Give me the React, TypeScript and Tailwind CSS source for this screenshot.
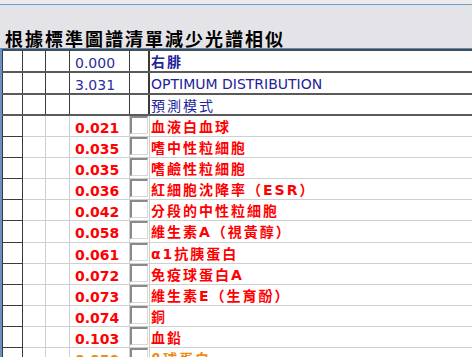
import React from "react";

type Row = { num: string; name: string; color: "red" | "orange"; h: number };

const redRows: Row[] = [
  { num: "0.021", name: "血液白血球", color: "red", h: 20 },
  { num: "0.035", name: "嗜中性粒細胞", color: "red", h: 20 },
  { num: "0.035", name: "嗜鹼性粒細胞", color: "red", h: 20 },
  { num: "0.036", name: "紅細胞沈降率（ESR）", color: "red", h: 20 },
  { num: "0.042", name: "分段的中性粒細胞", color: "red", h: 20 },
  { num: "0.058", name: "維生素A（視黃醇）", color: "red", h: 21 },
  { num: "0.061", name: "α1抗胰蛋白", color: "red", h: 20 },
  { num: "0.072", name: "免疫球蛋白A", color: "red", h: 20 },
  { num: "0.073", name: "維生素E（生育酚）", color: "red", h: 20 },
  { num: "0.074", name: "銅", color: "red", h: 20 },
  { num: "0.103", name: "血鉛", color: "red", h: 20 },
  { num: "0.050", name: "β球蛋白", color: "orange", h: 20 },
];

const numFont = { fontFamily: '"DejaVu Sans", sans-serif' };
const cjkFont = { fontFamily: '"DejaVu Sans", "Noto Sans CJK TC", sans-serif' };

function HeaderRow({ num, name, bold, latin, h }: { num: string; name: string; bold?: boolean; latin?: boolean; h: number }) {
  return (
    <div className="flex overflow-hidden border-b-2 border-[#5a5a5a]" style={{ height: h + 2 }}>
      <div className="w-[21px] shrink-0 border-l border-r border-[#3a3a3a] bg-white" />
      <div className="w-[23px] shrink-0 border-r border-[#3a3a3a] bg-white" />
      <div className="w-[24px] shrink-0 border-r border-[#3a3a3a] bg-white" />
      <div
        className="w-[60px] shrink-0 border-r border-[#3a3a3a] bg-white pl-[5px] pt-[2px] text-[14px] leading-[20px] text-[#2c2ca0]"
        style={numFont}
      >
        {num}
      </div>
      <div className="w-[20px] shrink-0 border-r-2 border-[#3a3a3a] bg-white" />
      <div
        className={
          "flex-1 bg-white pl-[1px] pt-[1px] text-[14px] leading-[20px] whitespace-nowrap text-[#22229a] " +
          (bold ? "font-bold " : "") +
          (latin ? "" : "tracking-[2px]")
        }
        style={cjkFont}
      >
        {name}
      </div>
    </div>
  );
}

function DataRow({ row }: { row: Row }) {
  const color = row.color === "red" ? "text-[#ff0000]" : "text-[#f08a10]";
  return (
    <div className="flex overflow-hidden" style={{ height: row.h + 1 }}>
      <div className="w-[21px] shrink-0 border-l border-r border-b border-[#3a3a3a] bg-white" />
      <div className="w-[23px] shrink-0 border-r border-b border-[#cfcfcf] bg-white" />
      <div className="w-[24px] shrink-0 border-r border-b border-[#cfcfcf] bg-white" />
      <div
        className={"w-[60px] shrink-0 border-r border-b border-[#cfcfcf] bg-white pl-[5px] pt-[2px] text-[14px] font-bold leading-[20px] " + color}
        style={numFont}
      >
        {row.num}
      </div>
      <div className="w-[20px] shrink-0 border-r border-b border-[#cfcfcf] bg-white">
        <div className="h-[18px] w-[18px] border-l-2 border-t-2 border-b border-r border-l-[#8a8a8a] border-t-[#8a8a8a] border-b-[#d8d8d8] border-r-[#d8d8d8] bg-white" />
      </div>
      <div
        className={"flex-1 border-b border-[#cfcfcf] bg-white pl-[1px] pt-[1px] text-[14px] font-bold tracking-[2px] leading-[20px] whitespace-nowrap " + color}
        style={cjkFont}
      >
        {row.name}
      </div>
    </div>
  );
}

export default function App() {
  return (
    <div className="h-[357px] w-[472px] overflow-hidden bg-[#e4e4e8]">
      <div className="h-[4px] bg-[#ececef]" />
      <div className="h-px bg-[#6f9ccc]" />
      <div className="flex h-[43px] items-end pb-[1px] pl-[5px]">
        <span
          className="text-[18px] font-bold leading-[18px] tracking-[2px] text-black whitespace-nowrap"
          style={{ fontFamily: '"Noto Sans CJK TC", sans-serif' }}
        >
          根據標準圖譜清單減少光譜相似
        </span>
      </div>
      <div className="h-px bg-[#5a8cc4]" />
      <div className="border-l-[2px] border-[#6a92c0]">
        <div className="h-[2px] bg-[#4a4a4a]" />
        <HeaderRow num="0.000" name="右腓" bold h={20} />
        <HeaderRow num="3.031" name="OPTIMUM DISTRIBUTION" latin h={20} />
        <HeaderRow num="" name="預測模式" h={19} />
        {redRows.map((r, i) => (
          <DataRow key={i} row={r} />
        ))}
      </div>
    </div>
  );
}
